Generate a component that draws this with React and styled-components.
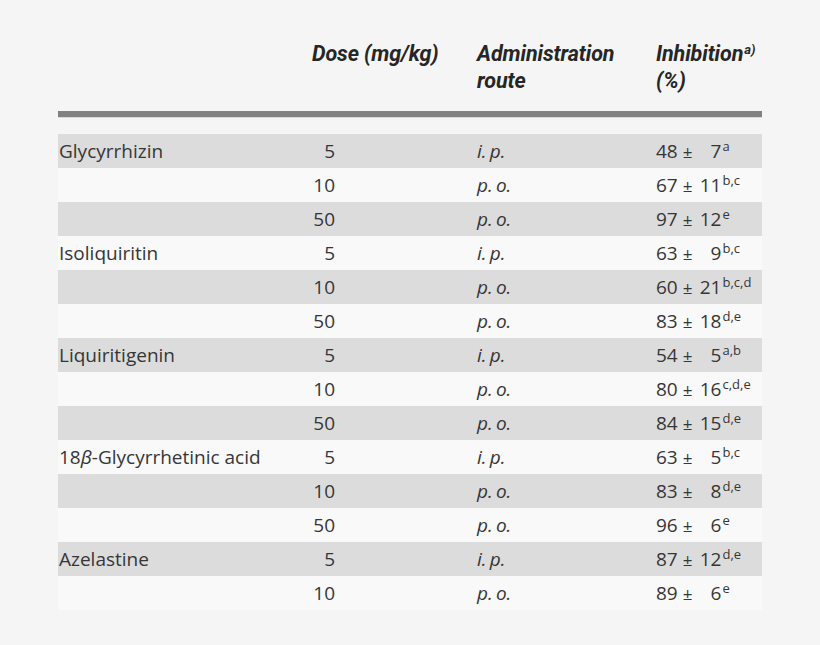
import React from "react";
import styled, { createGlobalStyle } from "styled-components";

const GlobalStyle = createGlobalStyle`
  html, body {
    margin: 0;
    padding: 0;
    background: #f5f5f5;
  }
`;

const Page = styled.div`
  width: 820px;
  height: 645px;
  padding: 40px 0 0 58px;
  box-sizing: border-box;
  background: #f5f5f5;
  font-family: "Open Sans", "Noto Sans", sans-serif;
  color: #363636;
`;

const Table = styled.div`
  width: 704px;
`;

const Row = styled.div`
  display: grid;
  grid-template-columns: 254px 165px 179px 106px;
  align-items: center;
`;

const HeadRow = styled(Row)`
  align-items: start;
  padding-bottom: 17px;
`;

const HeadCell = styled.div`
  font-family: Roboto, "Liberation Sans", sans-serif;
  font-style: italic;
  font-weight: bold;
  font-size: 21.5px;
  letter-spacing: -0.1px;
  line-height: 27px;
  height: 54px;
  color: #262626;
  white-space: nowrap;
`;

const Bar = styled.div`
  height: 6px;
  background: #818181;
  border-bottom: 1px solid #d8d8d8;
  margin-bottom: 16px;
`;

const BodyRow = styled(Row)`
  height: 34px;
  background: ${(p) => (p.$shaded ? "#dcdcdc" : "#f9f9f9")};
  font-size: 19px;
  line-height: 24px;
`;

const Cell = styled.div`
  padding-left: 1px;
  white-space: nowrap;
`;

const DoseCell = styled.div`
  text-align: right;
  padding-right: 142px;
`;

const Route = styled.div`
  font-style: italic;
`;

const Value = styled.div`
  white-space: nowrap;
`;

const Pm = styled.span`
  font-size: 17px;
  margin: 0 6px 0 5px;
`;

const Sd = styled.span`
  display: inline-block;
  width: 23px;
  text-align: right;
`;

const Sup = styled.sup`
  font-size: 13px;
  line-height: 0;
  vertical-align: 0;
  position: relative;
  top: -7px;
  margin-left: 1px;
  letter-spacing: 0;
  font-style: ${(p) => (p.$italic ? "italic" : "normal")};
`;

const rows = [
  ["Glycyrrhizin", "5", "i.\u2009p.", "48", "7", "a"],
  ["", "10", "p.\u2009o.", "67", "11", "b,c"],
  ["", "50", "p.\u2009o.", "97", "12", "e"],
  ["Isoliquiritin", "5", "i.\u2009p.", "63", "9", "b,c"],
  ["", "10", "p.\u2009o.", "60", "21", "b,c,d"],
  ["", "50", "p.\u2009o.", "83", "18", "d,e"],
  ["Liquiritigenin", "5", "i.\u2009p.", "54", "5", "a,b"],
  ["", "10", "p.\u2009o.", "80", "16", "c,d,e"],
  ["", "50", "p.\u2009o.", "84", "15", "d,e"],
  ["18\u03b2-Glycyrrhetinic acid", "5", "i.\u2009p.", "63", "5", "b,c"],
  ["", "10", "p.\u2009o.", "83", "8", "d,e"],
  ["", "50", "p.\u2009o.", "96", "6", "e"],
  ["Azelastine", "5", "i.\u2009p.", "87", "12", "d,e"],
  ["", "10", "p.\u2009o.", "89", "6", "e"],
];

const Name = ({ text }) => {
  if (text.startsWith("18\u03b2")) {
    return (
      <Cell>
        18<i>β</i>-Glycyrrhetinic acid
      </Cell>
    );
  }
  return <Cell>{text}</Cell>;
};

export default function App() {
  return (
    <Page>
      <GlobalStyle />
      <Table>
        <HeadRow>
          <div />
          <HeadCell>Dose (mg/kg)</HeadCell>
          <HeadCell>
            Administration
            <br />
            route
          </HeadCell>
          <HeadCell>
            Inhibition<Sup $italic>a)</Sup>
            <br />
            (%)
          </HeadCell>
        </HeadRow>
        <Bar />
        {rows.map((r, i) => (
          <BodyRow key={i} $shaded={i % 2 === 0}>
            <Name text={r[0]} />
            <DoseCell>{r[1]}</DoseCell>
            <Route>{r[2]}</Route>
            <Value>
              {r[3]}
              <Pm>±</Pm>
              <Sd>{r[4]}</Sd>
              <Sup>{r[5]}</Sup>
            </Value>
          </BodyRow>
        ))}
      </Table>
    </Page>
  );
}
